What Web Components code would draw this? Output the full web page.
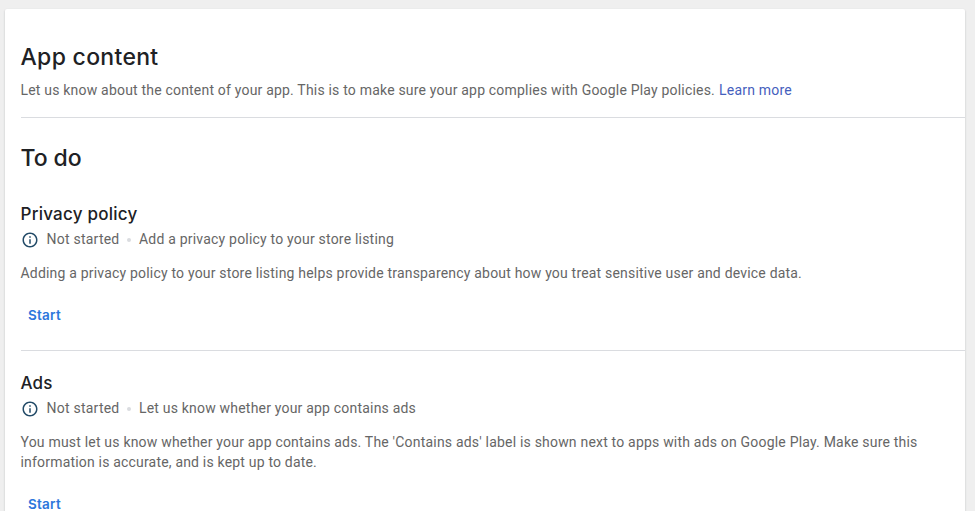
<!DOCTYPE html>
<html lang="en"><head><meta charset="utf-8"><title>App content</title>
<style>
html,body{margin:0;height:511px;overflow:hidden}
body{background:#efefef;font-family:Roboto,sans-serif;font-size:14px;line-height:20px;color:#666}
</style></head><body>
<content-page></content-page>
<script>
class InfoIcon extends HTMLElement{constructor(){super();this.attachShadow({mode:'open'}).innerHTML=`
<style>:host{display:block;width:18px;height:18px;color:#234b68}svg{display:block}</style>
<svg width="18" height="18" viewBox="0 0 24 24" fill="currentColor"><path d="M11 7h2v2h-2zm0 4h2v6h-2zm1-9C6.480 2 2 6.480 2 12s4.480 10 10 10 10-4.480 10-10S17.520 2 12 2zm0 18c-4.410 0-8-3.590-8-8s3.590-8 8-8 8 3.590 8 8-3.590 8-8 8z"/></svg>`}}
customElements.define('info-icon',InfoIcon);
class FitText extends HTMLElement{
constructor(){super();this.attachShadow({mode:'open'}).innerHTML=`<style>:host{display:block;white-space:nowrap}</style><span><slot></slot></span>`}
connectedCallback(){const w=parseFloat(this.getAttribute('width'));if(!w)return;const s=this.shadowRoot.querySelector('span');s.style.letterSpacing='0px';const d=w-s.getBoundingClientRect().width;s.style.letterSpacing=(d/this.textContent.length)+'px'}}
class TaskItem extends HTMLElement{constructor(){super();this.attachShadow({mode:'open'}).innerHTML=`
<style>:host{display:block}
.title{font:500 17px/24px Inter,sans-serif;color:#202124}
.status{display:flex;align-items:center;height:20px;margin-top:3px}
info-icon{margin-right:8px;margin-top:1px}
.dot{width:4px;height:4px;border-radius:50%;background:#dadce0;margin:1px 8px 0 7.500px}
.body{margin-top:14px}
.start{margin:22px 0 0 7.500px;font:600 13.500px/20px Inter,sans-serif;color:#2b76dc}
</style><div class="title"><slot name="title"></slot></div>
<div class="status"><info-icon></info-icon><fit-text width="73">Not started</fit-text><i class="dot"></i><slot name="status"></slot></div>
<div class="body"><slot></slot></div><div class="start"><fit-text width="33">Start</fit-text></div>`}}
class ContentPage extends HTMLElement{constructor(){super();this.attachShadow({mode:'open'}).innerHTML=`
<style>:host{display:block;padding:9px 10px 0 5px}
main{background:#fff;box-sizing:border-box;height:520px;padding:33px 0 0 15.500px;border-radius:2px;box-shadow:0 1px 2px rgba(60,64,67,.3)}
h1,h2{font:500 23px/30px Inter,sans-serif;color:#202124;margin:0}
.intro{display:flex;margin-top:8px}.intro a{color:#4560bd;margin-left:4px}
hr{border:0;height:1px;background:#dadce0;margin:0}
.first{margin-top:17px}h2{margin-top:25px}
task-item.a{margin-top:29px}.second{margin-top:25px}task-item.b{margin-top:20px}
</style><main><h1><fit-text width="138">App content</fit-text></h1>
<div class="intro"><fit-text width="694.500">Let us know about the content of your app. This is to make sure your app complies with Google Play policies.</fit-text><a><fit-text width="73">Learn more</fit-text></a></div>
<hr class="first"><h2><fit-text width="61">To do</fit-text></h2>
<task-item class="a"><fit-text slot="title" width="117">Privacy policy</fit-text><fit-text slot="status" width="255">Add a privacy policy to your store listing</fit-text><fit-text width="781.500">Adding a privacy policy to your store listing helps provide transparency about how you treat sensitive user and device data.</fit-text></task-item>
<hr class="second"><task-item class="b"><fit-text slot="title" width="32">Ads</fit-text><fit-text slot="status" width="277">Let us know whether your app contains ads</fit-text><fit-text width="897">You must let us know whether your app contains ads. The 'Contains ads' label is shown next to apps with ads on Google Play. Make sure this</fit-text><fit-text width="296.500">information is accurate, and is kept up to date.</fit-text></task-item></main>`}}
customElements.define('task-item',TaskItem);
customElements.define('content-page',ContentPage);
customElements.define('fit-text',FitText);
</script></body></html>
